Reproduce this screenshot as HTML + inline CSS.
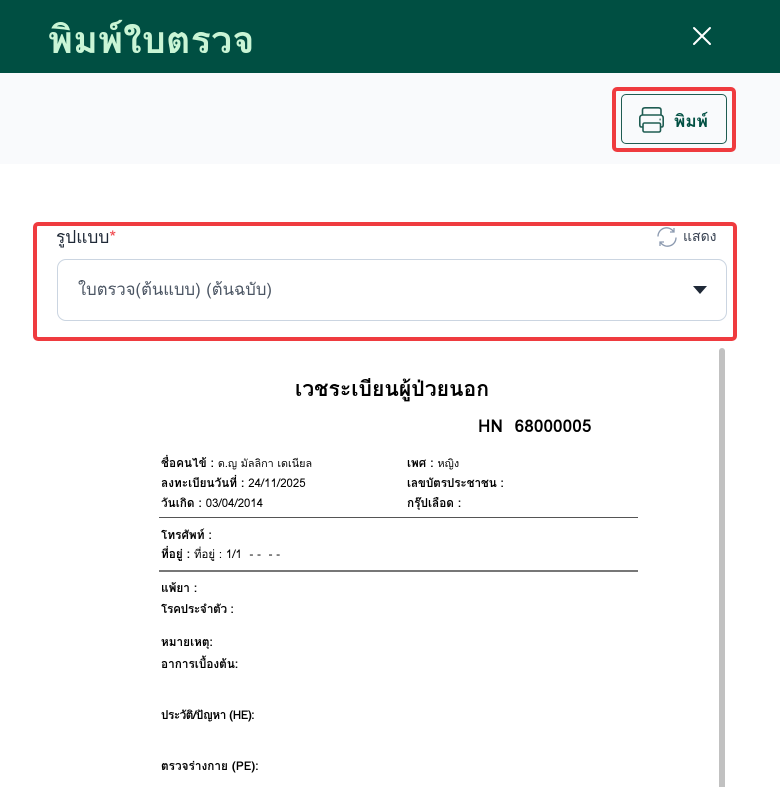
<!DOCTYPE html>
<html lang="th"><head><meta charset="utf-8"><title>พิมพ์ใบตรวจ</title>
<style>
html,body{margin:0;padding:0;background:#fff}
body{position:relative;width:780px;height:787px;overflow:hidden;font-family:"Tahoma","Loma","Noto Sans Thai Looped","Noto Serif Thai","Liberation Sans",sans-serif}
div,span,svg{position:absolute}
.t{white-space:nowrap;line-height:1}
.d{font-size:11.800px;color:#000;white-space:nowrap;line-height:14px;font-weight:700}
.d b{font-weight:400;font-size:11.400px}
.d b.th{font-size:10.800px}
</style></head><body>
<div style="left:0;top:0;width:780px;height:73px;background:#004f42"></div>
<div class="t" style="left:48px;top:21px;font-size:38px;font-weight:700;color:#c9f5d5">พิมพ์ใบตรวจ</div>
<svg style="left:692px;top:26px" width="20" height="20" viewBox="0 0 20 20"><path d="M2 2L18 18M18 2L2 18" stroke="#fff" stroke-width="2" stroke-linecap="round" fill="none"/></svg>
<div style="left:0;top:73px;width:780px;height:91px;background:#f9fafc"></div>
<div style="left:612px;top:87px;width:124px;height:65px;box-sizing:border-box;border:4px solid #ef3b3f;border-radius:5px"></div>
<div style="left:621px;top:94px;width:106px;height:50px;box-sizing:border-box;border:1px solid #1f5c52;border-radius:5px"></div>
<svg style="left:639px;top:107px" width="25" height="26" viewBox="0 0 25 26" fill="none" stroke="#1f5c52" stroke-width="1.600"><path d="M3.500 8V3Q3.500 .8 6 .8H19.500Q22 .8 22 3V8"/><path d="M4 20H2.500Q.8 20 .8 18V11Q.8 8 4 8H21Q24.200 8 24.200 11V18Q24.200 20 22.500 20H21.500"/><rect x="4" y="16" width="17.500" height="9" rx="1.500"/><path d="M20.500 12.500h1.200" stroke-width="1.800"/></svg>
<div class="t" style="left:674px;top:112.500px;font-size:17.200px;font-weight:700;color:#004f42">พิมพ์</div>

<div style="left:33px;top:222px;width:704px;height:119px;box-sizing:border-box;border:4px solid #ef3b3f;border-radius:5px"></div>
<div class="t" style="left:56px;top:229px;font-size:17.300px;color:#1f2937">รูปแบบ<span style="position:static;color:#f04a4f">*</span></div>
<svg style="left:657px;top:227px" width="20" height="20" viewBox="0 0 20 20" fill="none" stroke="#8c9ab0" stroke-width="1.300"><path d="M1 9.500A8.500 8.500 0 0 1 16.500 4.500"/><path d="M17 1v4h-4"/><path d="M19 10.500A8.500 8.500 0 0 1 3.500 15.500"/><path d="M3 19v-4h4"/></svg>
<div class="t" style="left:683px;top:230px;font-size:14px;color:#374151">แสดง</div>
<div style="left:57px;top:259px;width:670px;height:62px;box-sizing:border-box;border:1px solid #cbd5e1;border-radius:9px;background:#fff"></div>
<div class="t" style="left:78px;top:282px;font-size:16.650px;color:#4b5563">ใบตรวจ(ต้นแบบ) (ต้นฉบับ)</div>
<svg style="left:693px;top:286px" width="14" height="8" viewBox="0 0 14 8"><path d="M0 0H14L7 8Z" fill="#1f2937"/></svg>

<div style="left:719px;top:348px;width:6px;height:439px;background:#c1c1c1;border-radius:3px 3px 0 0"></div>

<div class="t" style="left:295px;top:378.500px;font-size:21.200px;font-weight:700;color:#000">เวชระเบียนผู้ป่วยนอก</div>
<div class="t" style="left:478px;top:418px;font-size:17.300px;font-weight:700;color:#000;white-space:pre">HN  68000005</div>

<div class="d" style="left:161px;top:457px">ชื่อคนไข้ : <b class="th">ด.ญ มัลลิกา เดเนียล</b></div>
<div class="d" style="left:161px;top:477px">ลงทะเบียนวันที่ : <b>24/11/2025</b></div>
<div class="d" style="left:161px;top:497px">วันเกิด : <b>03/04/2014</b></div>
<div class="d" style="left:407px;top:457px">เพศ : <b class="th">หญิง</b></div>
<div class="d" style="left:407px;top:477px;letter-spacing:-.15px">เลขบัตรประชาชน :</div>
<div class="d" style="left:407px;top:497px">กรุ๊ปเลือด :</div>
<div style="left:159px;top:517px;width:479px;height:1px;background:#555"></div>
<div class="d" style="left:161px;top:529px">โทรศัพท์ :</div>
<div class="d" style="left:161px;top:548px;white-space:pre">ที่อยู่ : <b>ที่อยู่ : 1/1  - -  - -</b></div>
<div style="left:159px;top:570px;width:479px;height:2px;background:#777"></div>
<div class="d" style="left:161px;top:582px">แพ้ยา :</div>
<div class="d" style="left:161px;top:603px;letter-spacing:-.3px">โรคประจำตัว :</div>
<div class="d" style="left:161px;top:636px">หมายเหตุ:</div>
<div class="d" style="left:161px;top:658px">อาการเบื้องต้น:</div>
<div class="d" style="left:161px;top:709px;letter-spacing:-.5px">ประวัติ/ปัญหา (HE):</div>
<div class="d" style="left:161px;top:760px">ตรวจร่างกาย (PE):</div>
</body></html>
